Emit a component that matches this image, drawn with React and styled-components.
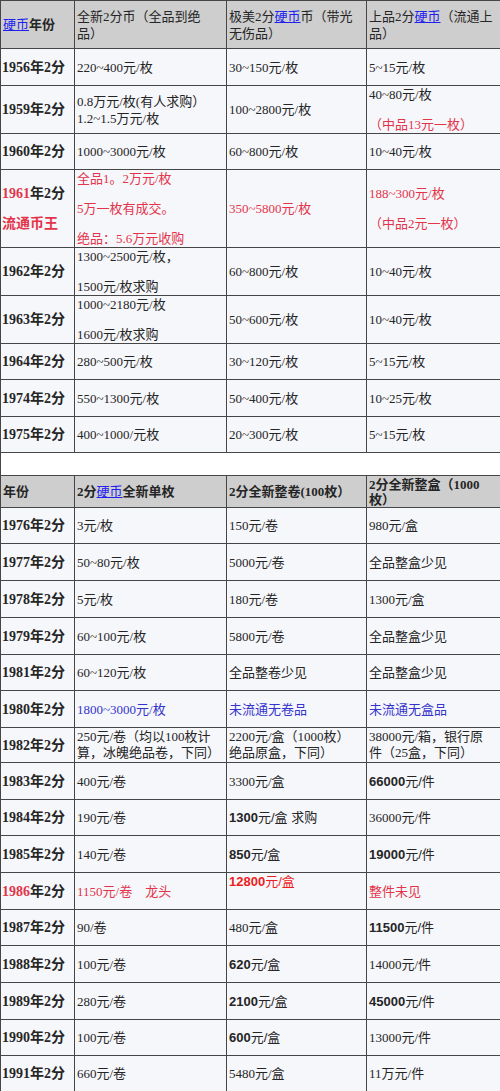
import React from "react";
import styled, { createGlobalStyle } from "styled-components";

const Global = createGlobalStyle`
  html, body { margin: 0; padding: 0; background: #fff; }
`;

const tones = {
  ink: "#252525",
  red: "#e3344a",
  hot: "#ee1c1c",
  blue: "#3434cc",
};

const Table = styled.table`
  width: 500px;
  border-collapse: collapse;
  table-layout: fixed;
  font-family: "Liberation Serif", "Noto Sans CJK SC", serif;
  font-size: 13px;
  color: ${tones.ink};
`;

const Col = styled.col`
  width: ${(p) => p.$w}px;
`;

const Row = styled.tr`
  height: ${(p) => p.$h}px;
`;

const Cell = styled.td`
  border: 1px solid #464646;
  background: ${(p) => (p.$head ? "#cecece" : p.$blank ? "#ffffff" : "#f6f7fb")};
  padding: 0 2px;
  vertical-align: ${(p) => (p.$top ? "top" : "middle")};
  line-height: ${(p) => p.$lh || 17}px;
  color: ${(p) => tones[p.$tone || "ink"]};
  font-weight: ${(p) => (p.$bold ? 700 : 400)};
  font-family: ${(p) =>
    p.$sans ? '"Liberation Sans", "Noto Sans CJK SC", sans-serif' : "inherit"};
  white-space: nowrap;
  overflow: hidden;
`;

const YearCell = styled(Cell)`
  font-weight: 700;
  font-size: 14px;
  padding-left: 1px;
`;

const Para = styled.div`
  & + & {
    margin-top: 13px;
  }
`;

const Link = styled.span`
  color: #1f1ff0;
  text-decoration: underline;
  font-weight: 400;
`;

const Red = styled.span`
  color: ${tones.red};
`;

const Strong = styled.span`
  font-weight: 700;
`;

const Year = ({ y, hot }) => (
  <>
    {hot ? <Red>{y}</Red> : y}年2分
  </>
);

const first = [
  { h: 37, y: "1956", c: ["220~400元/枚", "30~150元/枚", "5~15元/枚"] },
  {
    h: 47,
    y: "1959",
    c: [
      <>0.8万元/枚(有人求购）<br />1.2~1.5万元/枚</>,
      "100~2800元/枚",
      <>
        <Para>40~80元/枚</Para>
        <Para><Red>（中品13元一枚）</Red></Para>
      </>,
    ],
  },
  { h: 36, y: "1960", c: ["1000~3000元/枚", "60~800元/枚", "10~40元/枚"] },
  {
    h: 78,
    y: "1961",
    hot: true,
    extra: "流通币王",
    tone: "red",
    c: [
      <>
        <Para>全品1。2万元/枚</Para>
        <Para>5万一枚有成交。</Para>
        <Para>绝品：5.6万元收购</Para>
      </>,
      "350~5800元/枚",
      <>
        <Para>188~300元/枚</Para>
        <Para>（中品2元一枚）</Para>
      </>,
    ],
  },
  {
    h: 48,
    y: "1962",
    c: [
      <>
        <Para>1300~2500元/枚，</Para>
        <Para>1500元/枚求购</Para>
      </>,
      "60~800元/枚",
      "10~40元/枚",
    ],
  },
  {
    h: 47,
    y: "1963",
    c: [
      <>
        <Para>1000~2180元/枚</Para>
        <Para>1600元/枚求购</Para>
      </>,
      "50~600元/枚",
      "10~40元/枚",
    ],
  },
  { h: 36, y: "1964", c: ["280~500元/枚", "30~120元/枚", "5~15元/枚"] },
  { h: 37, y: "1974", c: ["550~1300元/枚", "50~400元/枚", "10~25元/枚"] },
  { h: 36, y: "1975", c: ["400~1000/元枚", "20~300元/枚", "5~15元/枚"] },
];

// sans cells with the figure in bold
const b = (num, rest) => ({ sans: true, node: <><Strong>{num}</Strong>{rest}</> });

const second = [
  { y: "1976", c: ["3元/枚", "150元/卷", "980元/盒"] },
  { y: "1977", c: ["50~80元/枚", "5000元/卷", "全品整盒少见"] },
  { y: "1978", c: ["5元/枚", "180元/卷", "1300元/盒"] },
  { y: "1979", c: ["60~100元/枚", "5800元/卷", "全品整盒少见"] },
  { y: "1981", c: ["60~120元/枚", "全品整卷少见", "全品整盒少见"] },
  { y: "1980", tone: "blue", c: ["1800~3000元/枚", "未流通无卷品", "未流通无盒品"] },
  {
    y: "1982",
    lh: 16,
    c: [
      <>250元/卷（均以100枚计<br />算，冰魄绝品卷，下同）</>,
      <>2200元/盒（1000枚）<br />绝品原盒，下同）</>,
      <>38000元/箱，银行原<br />件（25盒，下同）</>,
    ],
  },
  { y: "1983", c: ["400元/卷", "3300元/盒", b("66000", "元/件")] },
  { y: "1984", c: ["190元/卷", b("1300", "元/盒 求购"), "36000元/件"] },
  { y: "1985", c: ["140元/卷", b("850", "元/盒"), b("19000", "元/件")] },
  {
    y: "1986",
    hot: true,
    c: [
      { tone: "red", node: "1150元/卷　龙头" },
      { tone: "hot", top: true, sans: true, node: <><Strong>12800</Strong>元/盒</> },
      { tone: "red", sans: true, node: "整件未见" },
    ],
  },
  { y: "1987", c: ["90/卷", "480元/盒", b("11500", "元/件")] },
  { y: "1988", c: ["100元/卷", b("620", "元/盒"), "14000元/件"] },
  { y: "1989", c: ["280元/卷", b("2100", "元/盒"), b("45000", "元/件")] },
  { y: "1990", c: ["100元/卷", b("600", "元/盒"), "13000元/件"] },
  { y: "1991", c: ["660元/卷", "5480元/盒", "11万元/件"] },
];

const secondHeights = [36, 37, 37, 37, 36, 37, 35, 37, 36, 37, 37, 36, 37, 37, 36, 36];

const DataCell = ({ v, row }) => {
  const item = v && typeof v === "object" && "node" in v ? v : { node: v };
  return (
    <Cell
      $tone={item.tone || row.tone}
      $top={item.top}
      $sans={item.sans}
      $lh={row.lh}
    >
      {item.node}
    </Cell>
  );
};

export default function App() {
  return (
    <>
      <Global />
      <Table>
        <colgroup>
          <Col $w={74} />
          <Col $w={152} />
          <Col $w={140} />
          <Col $w={134} />
        </colgroup>
        <tbody>
          <Row $h={48}>
            <Cell $head $bold>
              <Link>硬币</Link>年份
            </Cell>
            <Cell $head>
              全新2分币（全品到绝
              <br />
              品）
            </Cell>
            <Cell $head>
              极美2分<Link>硬币</Link>币（带光
              <br />
              无伤品）
            </Cell>
            <Cell $head>
              上品2分<Link>硬币</Link>（流通上
              <br />
              品）
            </Cell>
          </Row>
          {first.map((r) => (
            <Row key={r.y} $h={r.h}>
              <YearCell $lh={r.extra ? 30 : 17}>
                <Year y={r.y} hot={r.hot} />
                {r.extra && (
                  <>
                    <br />
                    <Red>{r.extra}</Red>
                  </>
                )}
              </YearCell>
              {r.c.map((v, i) => (
                <DataCell key={i} v={v} row={r} />
              ))}
            </Row>
          ))}
          <Row $h={23}>
            <Cell $blank colSpan={4} />
          </Row>
          <Row $h={32}>
            <Cell $head $bold>年份</Cell>
            <Cell $head $bold>
              2分<Link>硬币</Link>全新单枚
            </Cell>
            <Cell $head $bold>2分全新整卷(100枚）</Cell>
            <Cell $head $bold $lh={15}>
              2分全新整盒（1000
              <br />
              枚）
            </Cell>
          </Row>
          {second.map((r, k) => (
            <Row key={r.y} $h={secondHeights[k]}>
              <YearCell>
                <Year y={r.y} hot={r.hot} />
              </YearCell>
              {r.c.map((v, i) => (
                <DataCell key={i} v={v} row={r} />
              ))}
            </Row>
          ))}
        </tbody>
      </Table>
    </>
  );
}
